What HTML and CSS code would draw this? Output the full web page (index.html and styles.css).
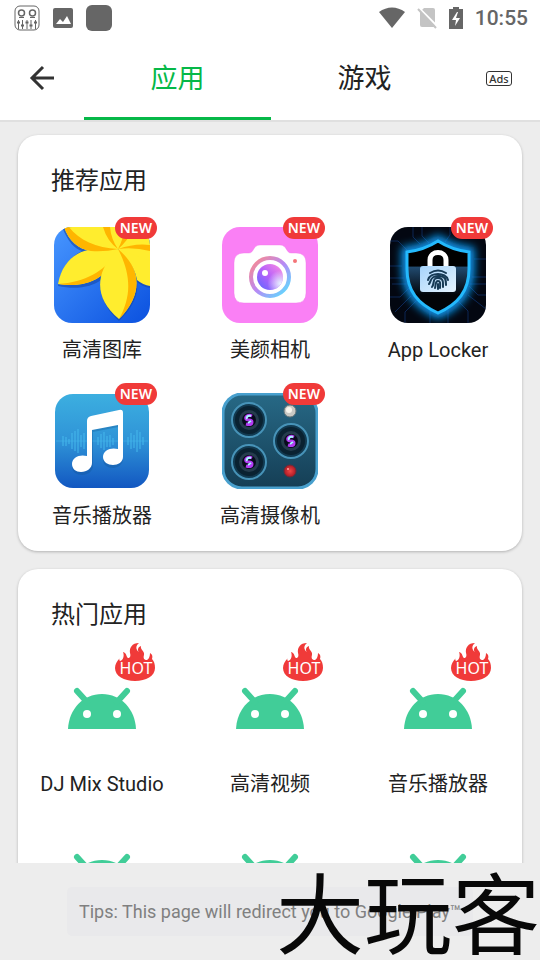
FILE: index.html
```
<!DOCTYPE html>
<html lang="zh-CN">
<head>
    <meta charset="UTF-8">
    <meta name="viewport" content="width=device-width, initial-scale=1.0">
    <title>推荐应用</title>
    <link rel="stylesheet" href="styles.css">
</head>
<body>
    <!-- shared shapes -->
    <svg class="defs" width="0" height="0" aria-hidden="true">
        <symbol id="android" viewBox="0 0 96 96">
            <path d="M14 68C15 48 29 33 48 33s33 15 34 35z" fill="#41cd98"/>
            <path d="M23 30l10 11M73 30L63 41" stroke="#41cd98" stroke-width="6" stroke-linecap="round"/>
            <circle cx="33" cy="53" r="4" fill="#fff"/>
            <circle cx="63" cy="53" r="4" fill="#fff"/>
        </symbol>
        <symbol id="flame" viewBox="0 0 42 38">
            <path d="M5 15C2 18 0 21 0 25c0 8 9 13 20 13s20-5 20-13c0-4-1-7-3-9 1-3 0-5-2-6 0 3-1 6-3 7-3 0-4-2-3-5 1-4-4-5-3-9-3 1-4 4-2 6-3-2-4-6 0-9-7 0-10 5-9 10 1 3 0 5-2 5-2-1-1-5-5-6 2 5-1 9-3 9-1-1-1-2 0-3z" fill="#f03a39"/>
        </symbol>
        <symbol id="lens" viewBox="0 0 36 36">
            <circle cx="18" cy="18" r="17" fill="#123a50" stroke="#4793b8" stroke-width="2"/>
            <circle cx="18" cy="18" r="14" fill="#0a2231"/>
            <circle cx="18" cy="18" r="10" fill="#253c4d"/>
            <circle cx="18" cy="18" r="7" fill="#080a1c"/>
            <path d="M21 14c-4-2-7 1-6 3s6 0 6 3-3 3-6 2" fill="none" stroke="#b43bf3" stroke-width="3"/>
            <path d="M20 14c-3-1-5 1-4 3M20 19l-3 2" fill="none" stroke="#a9f5ff" stroke-width="2"/>
        </symbol>
    </svg>

    <div class="status-bar">
        <div class="status-group status-left">
            <svg width="26" height="26" viewBox="0 0 26 26" fill="none" stroke="#666">
                <rect x="1" y="1" width="24" height="24" rx="5"/>
                <circle cx="7.500" cy="8" r="3" stroke-width="1.500"/>
                <circle cx="18.500" cy="8" r="3" stroke-width="1.500"/>
                <path d="M5 12.500h5M16 12.500h5M4.500 15v9M8.500 15v9M13 15v9M17 15v9M21.500 15v9"/>
                <path d="M3 17.500h3M7 20.500h3M11.500 17.500h3M15.500 20.500h3M20 17.500h3" stroke-width="2"/>
            </svg>
            <svg width="20" height="20" viewBox="0 0 20 20">
                <rect width="20" height="20" rx="2" fill="#666"/>
                <path d="M3 16l4-5 3 3 4-6 4 8z" fill="#fff"/>
            </svg>
            <span class="status-block"></span>
        </div>
        <div class="status-group status-right">
            <svg width="26" height="22" viewBox="0 0 26 22">
                <path d="M0 5C8-1 18-1 26 5L13 21z" fill="#666"/>
            </svg>
            <svg width="20" height="22" viewBox="0 0 20 22">
                <path d="M7 1h9q2 0 2 2v15q0 2-2 2H5q-2 0-2-2V5z" fill="#c4c4c4"/>
                <path d="M2 1l18 18" stroke="#fff" stroke-width="2"/>
                <path d="M1 2l18 19" stroke="#c4c4c4" stroke-width="2"/>
            </svg>
            <svg width="14" height="22" viewBox="0 0 14 22">
                <path d="M4 0h6v2h4v20H0V2h4z" fill="#666"/>
                <path d="M8 5l-5 8h4l-1 6 5-8H7l2-6z" fill="#fff"/>
            </svg>
            <span class="clock">10:55</span>
        </div>
    </div>

    <header class="header">
        <button class="back-btn" aria-label="Back">
            <svg width="26" height="26" viewBox="0 0 26 26" fill="none" stroke="#333" stroke-width="3">
                <path d="M25 13H3M14 2L3 13l11 11"/>
            </svg>
        </button>
        <button class="tab active">应用</button>
        <button class="tab">游戏</button>
        <button class="ads-btn"><span class="ads-label">Ads</span></button>
    </header>

    <main class="content">
        <section class="card">
            <h2>推荐应用</h2>
            <div class="app-grid">
                <a class="app" href="#">
                    <span class="app-icon">
                        <svg viewBox="0 0 96 96">
                            <defs>
                                <linearGradient id="blueBg" x1="0" y1="0" x2="1" y2="1">
                                    <stop offset="0" stop-color="#4796ff"/>
                                    <stop offset="1" stop-color="#0b51df"/>
                                </linearGradient>
                                <clipPath id="round"><rect width="96" height="96" rx="18"/></clipPath>
                            </defs>
                            <g clip-path="url(#round)">
                                <rect width="96" height="96" fill="url(#blueBg)"/>
                                <path d="M8 0C14 15 21 22 28 24 15 30 7 42 4 59c18 4 34 1 43-6-3 16 7 32 18 41 12-11 20-25 18-39q6 5 13 6V0z" fill="#1548a8" opacity=".6"/>
                                <path d="M10 0C15 14 24 22 37 24L64 22 96 58V0z" fill="#ffed2e"/>
                                <path d="M64 22C35 18 10 25 4 57c30 5 54-8 60-35z" fill="#ffed2e"/>
                                <path d="M4 57c30-2 50-15 60-35C58 49 34 62 4 57z" fill="#ffb500"/>
                                <path d="M10 0C15 14 24 22 37 24q14 1 27-2C42 21 25 13 15 0z" fill="#ffb500"/>
                                <path d="M49 0q4 14 15 22Q57 12 56 0zM80 0Q74 14 64 22 69 13 71 0zM64 22q17-6 32-4v6q-16-4-32-2z" fill="#ffb500"/>
                                <path d="M64 22c8 8 17 18 19 31q6 5 13 6V34z" fill="#ffed2e"/>
                                <path d="M64 22C42 43 38 70 65 92c23-23 24-49-1-70z" fill="#ffed2e"/>
                                <path d="M64 22c14 27 13 48 1 70 23-23 24-49-1-70z" fill="#ffb500"/>
                            </g>
                        </svg>
                        <span class="badge-new">NEW</span>
                    </span>
                    <span class="app-name">高清图库</span>
                </a>
                <a class="app" href="#">
                    <span class="app-icon">
                        <svg viewBox="0 0 96 96">
                            <defs>
                                <linearGradient id="ring" x1="0" y1="0" x2="1" y2="1">
                                    <stop offset="0" stop-color="#ff8a86"/>
                                    <stop offset=".5" stop-color="#b889f5"/>
                                    <stop offset="1" stop-color="#52e6ff"/>
                                </linearGradient>
                                <linearGradient id="glass" x1="0" y1="1" x2="1" y2="0">
                                    <stop offset="0" stop-color="#5868ff"/>
                                    <stop offset=".5" stop-color="#b761fa"/>
                                    <stop offset="1" stop-color="#ff8fe1"/>
                                </linearGradient>
                                <radialGradient id="shine" cx=".9" cy=".75" r=".5">
                                    <stop offset="0" stop-color="#e5f4ff"/>
                                    <stop offset="1" stop-color="#e5f4ff" stop-opacity="0"/>
                                </radialGradient>
                            </defs>
                            <rect width="96" height="96" rx="18" fill="#fa80f5"/>
                            <path d="M22 26h5c5 0 4-8 11-8h20c7 0 6 8 11 8h5q10 0 10 10v30q0 10-10 10H22q-10 0-10-10V36q0-10 10-10z" fill="#fff" stroke="#ef72e9" stroke-opacity=".4"/>
                            <circle cx="48" cy="50" r="19" fill="#fff" stroke="url(#ring)" stroke-width="4"/>
                            <circle cx="48" cy="50" r="13" fill="url(#glass)"/>
                            <circle cx="48" cy="50" r="13" fill="url(#shine)"/>
                            <circle cx="43" cy="46" r="3" fill="#fff"/>
                            <circle cx="73" cy="34" r="2" fill="#f47478"/>
                        </svg>
                        <span class="badge-new">NEW</span>
                    </span>
                    <span class="app-name">美颜相机</span>
                </a>
                <a class="app" href="#">
                    <span class="app-icon">
                        <svg viewBox="0 0 96 96">
                            <defs>
                                <filter id="glow" x="-30%" y="-30%" width="160%" height="160%"><feGaussianBlur stdDeviation="4"/></filter>
                                <linearGradient id="shield" x1="0" y1="0" x2="0" y2="1">
                                    <stop offset="0" stop-color="#000"/>
                                    <stop offset=".35" stop-color="#000"/>
                                    <stop offset=".36" stop-color="#214b70"/>
                                    <stop offset=".75" stop-color="#020408"/>
                                </linearGradient>
                                <linearGradient id="lock" x1="0" y1="0" x2="1" y2="1">
                                    <stop offset="0" stop-color="#a6d3fa"/>
                                    <stop offset="1" stop-color="#e5f4ff"/>
                                </linearGradient>
                            </defs>
                            <g clip-path="url(#round)">
                                <rect width="96" height="96" fill="#030711"/>
                                <path d="M0 14h8l10 10M0 39h12M0 51h14M2 57h14M0 70h10l9-9M5 85l16-16M15 96V85l14-14M32 0v9l7 7M23 0v10l7 7M60 0v8l-5 7M96 50H82M96 57H80M96 68h-8l-9-9M96 82L78 68M78 96V84L68 74M40 96V84M58 96V83M96 32H84" fill="none" stroke="#123c83" opacity=".6"/>
                                <path d="M48 14q14 9 31 11v17C79 64 68 77 48 86 28 77 17 64 17 42V25q17-2 31-11z" fill="none" stroke="#0b9bf5" stroke-width="11" filter="url(#glow)"/>
                                <path d="M48 14q14 9 31 11v17C79 64 68 77 48 86 28 77 17 64 17 42V25q17-2 31-11z" fill="url(#shield)" stroke="#24b9fc" stroke-width="3"/>
                                <path d="M40 40v-7c0-10 16-10 16 0v7" fill="none" stroke="#fff" stroke-width="5"/>
                                <rect x="30" y="39" width="36" height="26" rx="3" fill="url(#lock)"/>
                                <g fill="none" stroke="#173b56" stroke-width="2" stroke-linecap="round">
                                    <path d="M40 46q8-5 16 0M38 53c2-8 18-8 20 0M39 57c2-2 1-8 9-8s8 4 8 9M42 60c3-4 0-9 6-9s5 5 5 9M45 61c1-3 0-7 3-7s2 4 2 7M48 57v5"/>
                                </g>
                            </g>
                        </svg>
                        <span class="badge-new">NEW</span>
                    </span>
                    <span class="app-name">App Locker</span>
                </a>
                <a class="app" href="#">
                    <span class="app-icon">
                        <svg viewBox="0 0 96 96">
                            <defs>
                                <linearGradient id="musicBg" x1="0" y1="0" x2="0" y2="1">
                                    <stop offset="0" stop-color="#3cafe0"/>
                                    <stop offset=".5" stop-color="#2f93d7"/>
                                    <stop offset="1" stop-color="#1257c1"/>
                                </linearGradient>
                            </defs>
                            <rect x="1" y="1" width="94" height="94" rx="18" fill="url(#musicBg)"/>
                            <path d="M9 43v10M12 44v9M15 46v5M18 40v16M21 38v20M24 36v24M27 42v12M30 40v16M44 44v8M47 41v14M50 39v18M53 43v11M56 42v12M59 45v7M74 44v8M77 40v16M80 42v13M83 37v22M86 39v17M89 44v8" stroke="#45b9ed" stroke-width="2" opacity=".5"/>
                            <path d="M2 48h92" stroke="#45b9ed" opacity=".5"/>
                            <path d="M33 28q0-4 4-5l28-6q4-1 4 3v44c0 5-5 9-10 9s-10-3-10-8c0-7 8-10 15-8V32l-25 5v34c0 5-5 9-11 9-5 0-10-3-10-8 0-7 8-10 15-8z" fill="#104f8e" opacity=".3" transform="translate(0 2)"/>
                            <path d="M33 28q0-4 4-5l28-6q4-1 4 3v44c0 5-5 8-10 8s-10-3-10-8c0-7 8-10 15-8V32l-26 5v33c0 5-5 9-11 9-5 0-9-3-9-8 0-7 8-10 15-8z" fill="#fff"/>
                        </svg>
                        <span class="badge-new">NEW</span>
                    </span>
                    <span class="app-name">音乐播放器</span>
                </a>
                <a class="app" href="#">
                    <span class="app-icon">
                        <svg viewBox="0 0 96 96">
                            <defs>
                                <linearGradient id="camBg" x1="0" y1="0" x2="0" y2="1">
                                    <stop offset="0" stop-color="#276986"/>
                                    <stop offset="1" stop-color="#153e55"/>
                                </linearGradient>
                                <radialGradient id="redDot"><stop offset="0" stop-color="#f14645"/><stop offset="1" stop-color="#a91925"/></radialGradient>
                            </defs>
                            <rect x="1" y="1" width="94" height="94" rx="19" fill="url(#camBg)" stroke="#48a0ce" stroke-width="3"/>
                            <use href="#lens" x="9" y="9" width="36" height="36"/>
                            <use href="#lens" x="9" y="51" width="36" height="36"/>
                            <use href="#lens" x="51" y="30" width="36" height="36"/>
                            <circle cx="68" cy="18" r="6" fill="#c9c9c4" stroke="#68777b"/>
                            <circle cx="67" cy="17" r="3" fill="#f7f5ed"/>
                            <circle cx="68" cy="78" r="6" fill="url(#redDot)" stroke="#702a38"/>
                            <circle cx="66" cy="76" r="1" fill="#ffa6a0"/>
                        </svg>
                        <span class="badge-new">NEW</span>
                    </span>
                    <span class="app-name">高清摄像机</span>
                </a>
            </div>
        </section>

        <section class="card">
            <h2>热门应用</h2>
            <div class="app-grid">
                <a class="app" href="#">
                    <span class="app-icon">
                        <svg><use href="#android"/></svg>
                        <span class="badge-hot"><svg><use href="#flame"/></svg><span>HOT</span></span>
                    </span>
                    <span class="app-name">DJ Mix Studio</span>
                </a>
                <a class="app" href="#">
                    <span class="app-icon">
                        <svg><use href="#android"/></svg>
                        <span class="badge-hot"><svg><use href="#flame"/></svg><span>HOT</span></span>
                    </span>
                    <span class="app-name">高清视频</span>
                </a>
                <a class="app" href="#">
                    <span class="app-icon">
                        <svg><use href="#android"/></svg>
                        <span class="badge-hot"><svg><use href="#flame"/></svg><span>HOT</span></span>
                    </span>
                    <span class="app-name">音乐播放器</span>
                </a>
                <a class="app" href="#" aria-label="App">
                    <span class="app-icon"><svg><use href="#android"/></svg></span>
                </a>
                <a class="app" href="#" aria-label="App">
                    <span class="app-icon"><svg><use href="#android"/></svg></span>
                </a>
                <a class="app" href="#" aria-label="App">
                    <span class="app-icon"><svg><use href="#android"/></svg></span>
                </a>
            </div>
        </section>
    </main>

    <footer class="footer">
        <p class="tips">Tips: This page will redirect you to Google Play™</p>
        <div class="watermark">大玩客</div>
    </footer>
</body>
</html>
```
FILE: styles.css
```
* {
    box-sizing: border-box;
}
body {
    margin: 0;
    height: 100vh;
    display: flex;
    flex-direction: column;
    overflow: hidden;
    font-family: Roboto, "Noto Sans CJK SC", sans-serif;
    background-color: #ededed;
    color: #222;
}
button {
    padding: 0;
    border: none;
    background: none;
    font-family: inherit;
    color: inherit;
    cursor: pointer;
}
.defs {
    position: absolute;
}
.status-bar {
    height: 36px;
    padding: 0 12px 0 14px;
    display: flex;
    justify-content: space-between;
    align-items: center;
    background-color: white;
}
.status-group {
    display: flex;
    align-items: center;
}
.status-left {
    gap: 13px;
}
.status-right {
    gap: 12px;
}
.status-block {
    width: 26px;
    height: 26px;
    border-radius: 6px;
    background-color: #666;
}
.clock {
    font-size: 21px;
    font-weight: 500;
    color: #666;
}
.header {
    height: 86px;
    flex-shrink: 0;
    display: grid;
    grid-template-columns: 84px 1fr 1fr 82px;
    background-color: white;
    border-bottom: 2px solid #e0e0e0;
}
.back-btn,
.ads-btn {
    display: flex;
    align-items: center;
    justify-content: center;
}
.tab {
    padding-bottom: 3px;
    font-size: 27px;
}
.tab.active {
    color: #06b848;
    box-shadow: inset 0 -3px #06b848;
}
.ads-label {
    padding: 0 2px;
    border: 1px solid #333;
    border-radius: 3px;
    font-family: "Noto Sans", sans-serif;
    font-size: 11px;
    font-weight: 500;
    line-height: 13px;
    color: #333;
}
.content {
    flex: 1;
    min-height: 0;
    padding: 13px 18px;
    overflow-y: auto;
    scrollbar-width: none;
}
.card {
    margin-bottom: 18px;
    padding: 28px 0 20px;
    border-radius: 20px;
    background-color: white;
    box-shadow: 0 1px 3px rgba(0,0,0,0.25);
}
h2 {
    margin: 0;
    padding: 0 33px;
    font-size: 24px;
    font-weight: 400;
    line-height: 36px;
}
.app-grid {
    display: grid;
    grid-template-columns: repeat(3, 1fr);
}
.app {
    padding-top: 28px;
    display: flex;
    flex-direction: column;
    align-items: center;
    gap: 12px;
    color: inherit;
    text-decoration: none;
}
.app-icon {
    position: relative;
    width: 96px;
    height: 96px;
}
.app-icon svg {
    display: block;
    width: 100%;
    height: 100%;
}
.app-name {
    font-size: 20px;
    line-height: 30px;
    white-space: nowrap;
}
.badge-new {
    position: absolute;
    top: -10px;
    right: -7px;
    padding: 0 5px;
    border-radius: 11px;
    background-color: #f03a39;
    color: white;
    font-family: "Noto Sans", sans-serif;
    font-size: 14px;
    font-weight: 600;
    line-height: 22px;
}
.badge-hot {
    position: absolute;
    top: -18px;
    right: -7px;
    width: 42px;
    height: 38px;
    display: flex;
    align-items: flex-end;
    justify-content: center;
    color: white;
    font-family: "Noto Sans", sans-serif;
    font-size: 16px;
    line-height: 25px;
}
.badge-hot svg {
    position: absolute;
    top: 0;
    left: 0;
}
.badge-hot span {
    position: relative;
}
.footer {
    position: relative;
    padding: 24px 67px;
}
.tips {
    margin: 0;
    padding: 0 12px;
    border-radius: 5px;
    background-color: #e9e9eb;
    color: #808080;
    font-size: 18px;
    line-height: 49px;
    white-space: nowrap;
}
.watermark {
    position: absolute;
    top: 0;
    right: 0;
    color: #080808;
    font-family: "Noto Sans CJK SC", sans-serif;
    font-size: 88px;
    font-weight: 400;
    line-height: 92px;
}
```
